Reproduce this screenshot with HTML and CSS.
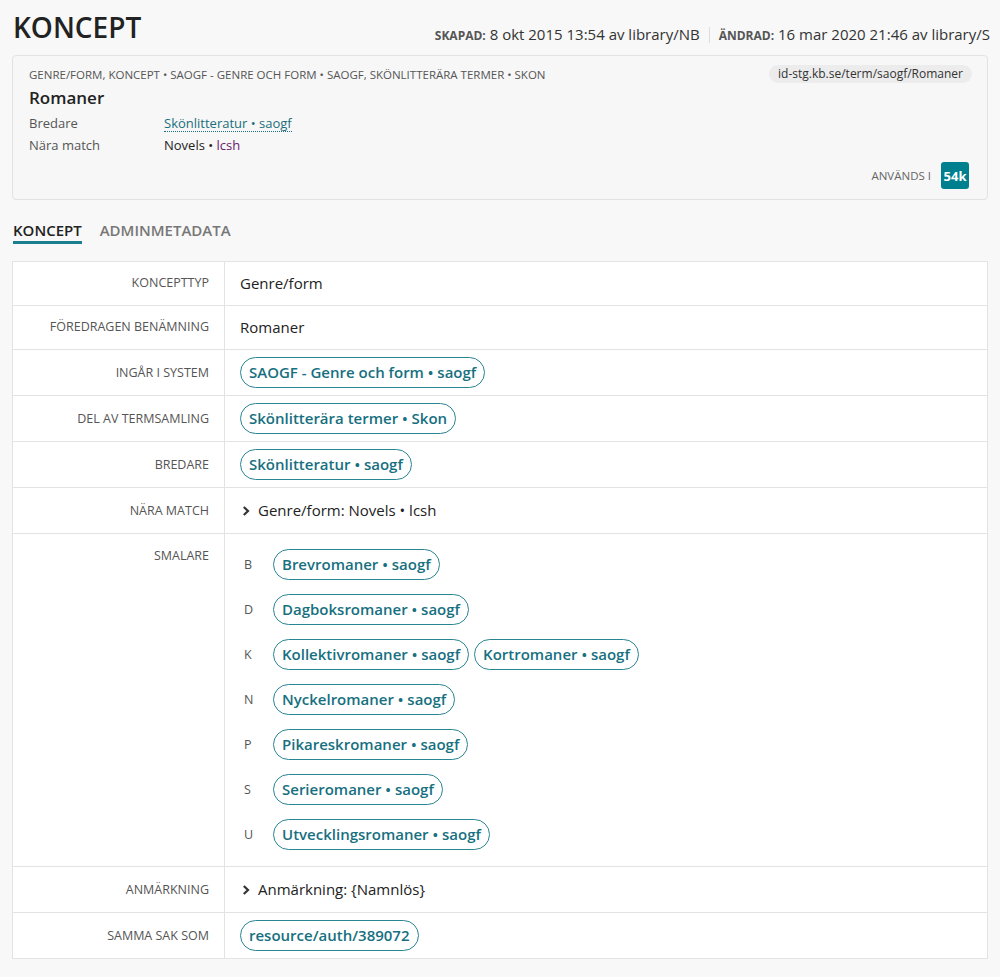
FILE: index.html
```html
<!DOCTYPE html>
<html lang="sv">
<head>
<meta charset="utf-8">
<title>Koncept</title>
<link rel="stylesheet" href="styles.css">
</head>
<body>
<div class="page">
  <header class="top">
    <h1 class="title">KONCEPT</h1>
    <div class="meta">
      <span class="meta-item"><span class="meta-label">SKAPAD:</span> 8 okt 2015 13:54 av library/NB</span>
      <span class="meta-sep"></span>
      <span class="meta-item"><span class="meta-label">ÄNDRAD:</span> 16 mar 2020 21:46 av library/S</span>
    </div>
  </header>

  <section class="card">
    <div class="card-head">
      <div class="crumbs">GENRE/FORM, KONCEPT • SAOGF - GENRE OCH FORM • SAOGF, SKÖNLITTERÄRA TERMER • SKON</div>
      <span class="idpill">id-stg.kb.se/term/saogf/Romaner</span>
    </div>
    <div class="card-title">Romaner</div>
    <div class="card-row"><span class="card-label">Bredare</span><span class="card-link">Skönlitteratur • saogf</span></div>
    <div class="card-row"><span class="card-label">Nära match</span><span>Novels • <span class="lcsh">lcsh</span></span></div>
    <div class="card-foot"><span class="used">ANVÄNDS I</span><span class="badge">54k</span></div>
  </section>

  <nav class="tabs">
    <span class="tab active">KONCEPT</span>
    <span class="tab">ADMINMETADATA</span>
  </nav>

  <div class="table">
    <div class="row">
      <div class="label">KONCEPTTYP</div>
      <div class="value"><span class="text">Genre/form</span></div>
    </div>
    <div class="row">
      <div class="label">FÖREDRAGEN BENÄMNING</div>
      <div class="value"><span class="text">Romaner</span></div>
    </div>
    <div class="row">
      <div class="label tall">INGÅR I SYSTEM</div>
      <div class="value"><span class="pill">SAOGF - Genre och form • saogf</span></div>
    </div>
    <div class="row">
      <div class="label tall">DEL AV TERMSAMLING</div>
      <div class="value"><span class="pill">Skönlitterära termer • Skon</span></div>
    </div>
    <div class="row">
      <div class="label tall">BREDARE</div>
      <div class="value"><span class="pill">Skönlitteratur • saogf</span></div>
    </div>
    <div class="row">
      <div class="label tall">NÄRA MATCH</div>
      <div class="value"><span class="text expand"><svg class="chev" viewBox="0 0 8 10" width="8" height="10"><path d="M1.8 1 L6 5 L1.8 9" fill="none" stroke="#333" stroke-width="2.2"/></svg>Genre/form: Novels • lcsh</span></div>
    </div>
    <div class="row">
      <div class="label mid">SMALARE</div>
      <div class="value groups">
        <div class="group"><span class="letter">B</span><div class="pills"><span class="pill">Brevromaner • saogf</span></div></div>
        <div class="group"><span class="letter">D</span><div class="pills"><span class="pill">Dagboksromaner • saogf</span></div></div>
        <div class="group"><span class="letter">K</span><div class="pills"><span class="pill">Kollektivromaner • saogf</span><span class="pill">Kortromaner • saogf</span></div></div>
        <div class="group"><span class="letter">N</span><div class="pills"><span class="pill">Nyckelromaner • saogf</span></div></div>
        <div class="group"><span class="letter">P</span><div class="pills"><span class="pill">Pikareskromaner • saogf</span></div></div>
        <div class="group"><span class="letter">S</span><div class="pills"><span class="pill">Serieromaner • saogf</span></div></div>
        <div class="group"><span class="letter">U</span><div class="pills"><span class="pill">Utvecklingsromaner • saogf</span></div></div>
      </div>
    </div>
    <div class="row">
      <div class="label tall">ANMÄRKNING</div>
      <div class="value"><span class="text expand"><svg class="chev" viewBox="0 0 8 10" width="8" height="10"><path d="M1.8 1 L6 5 L1.8 9" fill="none" stroke="#333" stroke-width="2.2"/></svg>Anmärkning: {Namnlös}</span></div>
    </div>
    <div class="row">
      <div class="label tall">SAMMA SAK SOM</div>
      <div class="value"><span class="pill">resource/auth/389072</span></div>
    </div>
  </div>
</div>
</body>
</html>
```

FILE: styles.css
```css
* { box-sizing: border-box; }
html, body { margin: 0; padding: 0; }
body {
  background: #f8f8f8;
  font-family: "Open Sans", "Liberation Sans", sans-serif;
  color: #222;
}
.page { padding: 0 12px 18px 12px; }

.top {
  display: flex;
  justify-content: space-between;
  align-items: flex-end;
  height: 55px;
  padding-bottom: 10px;
}
.title {
  margin: 0;
  font-size: 28px;
  font-weight: 600;
  line-height: 36px;
  color: #222;
  padding-left: 1px;
}
.meta {
  display: flex;
  align-items: center;
  font-size: 15px;
  color: #333;
  white-space: nowrap;
  margin-right: -2px;
  line-height: 20px;
  margin-bottom: -1px;
}
.meta-label { font-size: 12px; font-weight: 700; color: #555; }
.meta-sep { width: 1px; height: 16px; background: #ddd; margin: 0 9px; }

.card {
  border: 1px solid #e2e2e2;
  border-radius: 4px;
  background: #f7f7f7;
  padding: 8px 16px 9px 16px;
  height: 145px;
}
.card-head {
  display: flex;
  justify-content: space-between;
  align-items: center;
  height: 20px;
}
.crumbs { font-size: 11.5px; color: #555; }
.idpill {
  font-size: 12px;
  color: #333;
  background: #ececec;
  border-radius: 9px;
  padding: 0 9px;
  line-height: 18px;
  margin-right: -1px;
}
.card-title { font-size: 17px; font-weight: 600; line-height: 28px; color: #222; }
.card-row { display: flex; font-size: 13px; line-height: 22px; color: #222; }
.card-label { width: 135px; color: #555; }
.card-link { color: #1a6e7d; border-bottom: 1px dotted #1a6e7d; line-height: 16px; align-self: center; }
.lcsh { color: #6b1a6b; }
.card-foot {
  display: flex;
  justify-content: flex-end;
  align-items: center;
  margin-top: 6px;
  margin-right: 2px;
}
.used { font-size: 11.5px; color: #666; margin-right: 10px; }
.badge {
  background: #00808f;
  color: #fff;
  font-size: 13px;
  font-weight: 700;
  width: 28px;
  height: 27px;
  border-radius: 3px;
  display: flex;
  align-items: center;
  justify-content: center;
}

.tabs {
  display: flex;
  gap: 18px;
  padding-left: 1px;
  margin-top: 19px;
  height: 42px;
}
.tab {
  font-size: 15px;
  font-weight: 600;
  color: #777;
  line-height: 22px;
  height: 25px;
}
.tab.active { color: #222; border-bottom: 3px solid #1a7f8e; }

.table {
  background: #fff;
  border: 1px solid #e3e3e3;
}
.row {
  display: flex;
  border-top: 1px solid #e3e3e3;
}
.row:first-child { border-top: 0; }
.label {
  width: 212px;
  flex: none;
  border-right: 1px solid #e3e3e3;
  text-align: right;
  padding: 10px 15px 0 0;
  font-size: 12.5px;
  line-height: 22px;
  color: #555;
}
.label.tall { padding-top: 12px; }
.label.mid { padding-top: 11px; }
.value {
  flex: 1;
  padding: 7px 15px;
  font-size: 15px;
}
.text { display: inline-block; line-height: 29px; color: #222; }
.expand { display: inline-flex; align-items: center; line-height: 31px; }
.chev { margin: 0 8px 0 2px; }
.pill {
  display: inline-block;
  border: 1px solid #2a8593;
  border-radius: 16px;
  padding: 0 8px;
  line-height: 29px;
  font-size: 15px;
  font-weight: 600;
  color: #17707f;
  white-space: nowrap;
}
.groups {
  display: flex;
  flex-direction: column;
  gap: 14px;
  padding-top: 15px;
  padding-bottom: 16px;
}
.group { display: flex; align-items: center; }
.letter { width: 33px; padding-left: 4px; font-size: 12.5px; color: #555; }
.pills { display: flex; gap: 5px; }
```
